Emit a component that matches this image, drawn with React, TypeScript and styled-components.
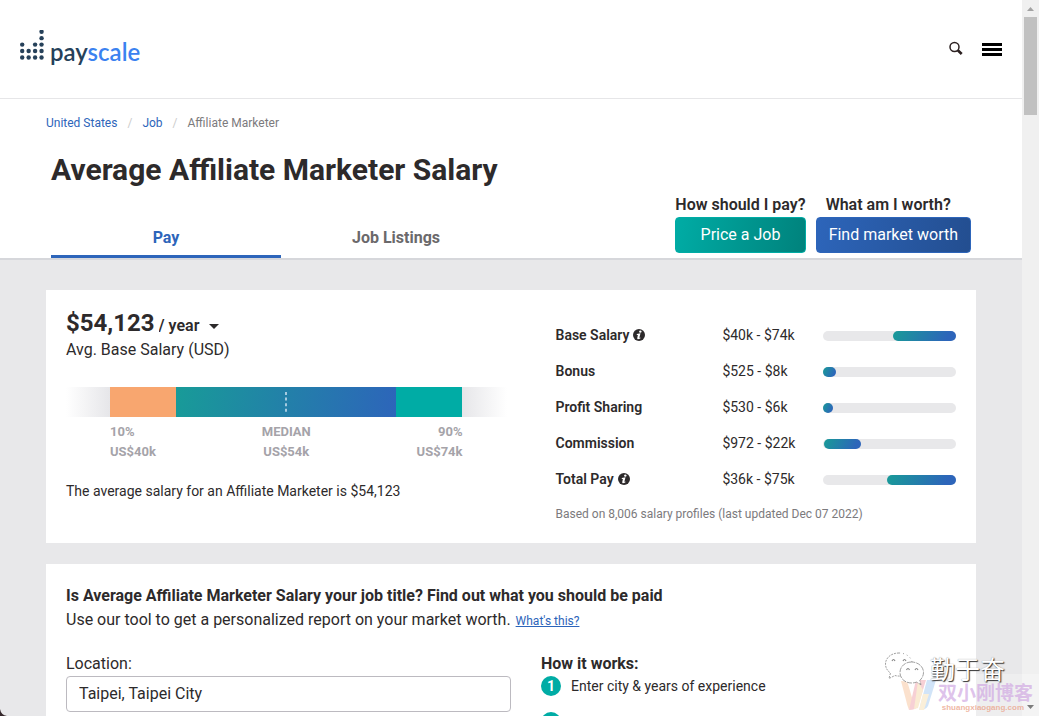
import React from "react";
import styled, { createGlobalStyle } from "styled-components";

const GlobalStyle = createGlobalStyle`
  *, *::before, *::after { box-sizing: border-box; }
  html, body { margin: 0; height: 100%; }
  body {
    background: #fff;
    color: #2d2a2b;
    font-family: Roboto, "Noto Sans CJK SC", sans-serif;
    font-size: 16px;
    line-height: 24px;
  }
  h1, h2, p, ol, ul { margin: 0; padding: 0; }
  ol, ul { list-style: none; }
  button, input, select { font: inherit; color: inherit; }
`;

const Shell = styled.div`
  position: relative;
  display: grid;
  grid-template-columns: minmax(0, 1fr) 17px;
  height: 100vh;
  overflow: hidden;
`;

const Page = styled.div`
  display: flex;
  flex-direction: column;
  min-height: 0;
  overflow: hidden;
`;

const ScrollTrack = styled.div`
  display: flex;
  flex-direction: column;
  align-items: center;
  background: #f0f0f0;
`;

const ScrollArrow = styled.svg`
  display: block;
  flex: none;
  width: 17px;
  height: 17px;
`;

const ScrollThumb = styled.div`
  width: 13px;
  height: 98px;
  margin-bottom: auto;
  background: #c1c1c1;
`;

const Header = styled.header`
  flex: none;
  display: flex;
  align-items: center;
  justify-content: space-between;
  height: 99px;
  padding: 0 20px 0 19px;
  border-bottom: 1px solid #e6e6e8;
`;

const Logo = styled.a`
  display: flex;
  align-items: flex-end;
  gap: 5px;
  padding-bottom: 4px;
  color: #26415a;
  text-decoration: none;
  font-family: Lato, sans-serif;
  font-size: 24px;
  font-weight: 600;
  line-height: 26px;
  svg { display: block; margin-bottom: 5px; }
`;

const LogoAccent = styled.span`
  color: #3b82f0;
`;

const HeaderTools = styled.div`
  display: flex;
  align-items: center;
  gap: 18px;
`;

const IconButton = styled.button`
  display: flex;
  padding: 0;
  border: 0;
  background: none;
  cursor: pointer;
`;

const Container = styled.div`
  width: calc(100% - 92px);
  max-width: 930px;
  margin: 0 auto;
`;

const TitleArea = styled.section`
  flex: none;
  padding-top: 14px;
  border-bottom: 2px solid #d6d7db;
`;

const Crumbs = styled.ul`
  display: flex;
  gap: 10px;
  font-size: 12px;
  line-height: 20px;
  color: #7c7a7d;
`;

const CrumbSlash = styled.span`
  margin-right: 10px;
  color: #ccc;
`;

const CrumbLink = styled.a`
  color: #2d65ba;
  text-decoration: none;
`;

const Title = styled.h1`
  margin-top: 19px;
  padding-left: 5px;
  font-size: 30px;
  font-weight: 700;
  line-height: 36px;
`;

const TitleRow = styled.div`
  display: flex;
  align-items: flex-end;
  justify-content: space-between;
  margin-top: 7px;
  padding: 0 5px;
`;

const Tabs = styled.nav`
  display: flex;
`;

const Tab = styled.a<{ $active?: boolean }>`
  width: 230px;
  padding: 10px 0 7px;
  border-bottom: 3px solid ${(p) => (p.$active ? "#2d65ba" : "transparent")};
  color: ${(p) => (p.$active ? "#2d65ba" : "#6b696b")};
  font-weight: 700;
  line-height: 20px;
  text-align: center;
  text-decoration: none;
`;

const Actions = styled.div`
  display: flex;
  gap: 10px;
  padding-bottom: 5px;
`;

const Action = styled.div`
  display: flex;
  flex-direction: column;
  gap: 2px;
`;

const ActionLabel = styled.span<{ $inset?: boolean }>`
  padding-left: ${(p) => (p.$inset ? "10px" : "0")};
  font-weight: 600;
  line-height: 20px;
`;

const ActionButton = styled.button<{ $tone: "teal" | "blue" }>`
  height: 36px;
  padding: 0 12px;
  border: 1px solid ${(p) => (p.$tone === "teal" ? "#00aca5" : "#2d65ba")};
  border-radius: 4px;
  background: ${(p) =>
    p.$tone === "teal"
      ? "linear-gradient(100deg, #00aca5, #00827c)"
      : "linear-gradient(100deg, #2d65ba, #234e90)"};
  color: #fff;
  line-height: 24px;
  white-space: nowrap;
  cursor: pointer;
`;

const Main = styled.main`
  flex: 1 0 auto;
  padding-top: 30px;
  background: #e8e8ea;
`;

const Card = styled.section`
  margin-bottom: 21px;
  padding: 20px 20px 19px;
  background: #fff;
`;

const SalaryGrid = styled.div`
  display: grid;
  grid-template-columns: 11fr 9fr;
`;

const Amount = styled.div`
  display: flex;
  align-items: baseline;
  gap: 4px;
  font-size: 24px;
  font-weight: 700;
  line-height: 26px;
`;

const PeriodField = styled.label`
  position: relative;
  font-size: 16px;
  line-height: 24px;
  svg { position: absolute; right: 0; top: 10px; pointer-events: none; }
`;

const PeriodSelect = styled.select`
  appearance: none;
  padding: 0 17px 0 0;
  border: 0;
  background: none;
  font-weight: 600;
`;

const RangeChart = styled.div`
  width: 90%;
  margin-top: 25px;
`;

const RangeBar = styled.div`
  display: grid;
  grid-template-columns: 10fr 15fr 50fr 15fr 10fr;
  height: 30px;
`;

const RangeSegment = styled.div<{ $fill: string }>`
  display: flex;
  align-items: center;
  justify-content: center;
  background: ${(p) => p.$fill};
`;

const MedianMark = styled.svg`
  display: block;
  width: 2px;
  height: 20px;
`;

const RangeLabels = styled.div`
  display: flex;
  justify-content: space-between;
  margin-top: 5px;
  padding: 0 10%;
  color: #a5a3a9;
  font-size: 13px;
  font-weight: 700;
  line-height: 20px;
`;

const RangeLabel = styled.div<{ $align: string }>`
  flex: 1;
  text-align: ${(p) => p.$align};
`;

const Summary = styled.p`
  margin-top: 19px;
  font-size: 14px;
  line-height: 20px;
`;

const PayTable = styled.table`
  width: 100%;
  margin-top: 7px;
  border-collapse: collapse;
  table-layout: fixed;
  font-size: 14px;
  th, td { height: 36px; padding: 0; text-align: left; line-height: 20px; }
  th { width: calc(500% / 12); font-weight: 600; }
  td { width: 25%; }
  td:last-child { width: calc(100% / 3); }
`;

const RowName = styled.span`
  display: inline-flex;
  align-items: center;
  gap: 4px;
`;

const Track = styled.div`
  display: flex;
  height: 10px;
  margin-top: 1px;
  border-radius: 5px;
  background: #e8e8ea;
`;

const TrackFill = styled.div`
  border-radius: 5px;
  background: linear-gradient(115deg, #189b98, #2d65ba 85%);
`;

const SourceNote = styled.p`
  margin-top: 7px;
  color: #7c7a7d;
  font-size: 12px;
  line-height: 20px;
`;

const CardTitle = styled.h2`
  font-size: 16px;
  font-weight: 700;
  line-height: 24px;
`;

const HintLink = styled.a`
  margin-left: 1px;
  color: #2d65ba;
  font-size: 12px;
`;

const ReportGrid = styled.div`
  display: grid;
  grid-template-columns: 50% 1fr;
  column-gap: 30px;
  margin-top: 19px;
`;

const Field = styled.label`
  display: flex;
  flex-direction: column;
`;

const TextInput = styled.input`
  width: 100%;
  height: 36px;
  padding: 0 12px 2px;
  border: 1px solid #bcbac0;
  border-radius: 4px;
  background: #fff;
`;

const Steps = styled.ol`
  display: flex;
  flex-direction: column;
  gap: 16px;
  font-size: 14px;
  line-height: 20px;
`;

const Step = styled.li`
  display: flex;
  gap: 10px;
`;

const StepNumber = styled.span`
  width: 20px;
  height: 20px;
  border-radius: 50%;
  background: #00aca5;
  color: #fff;
  font-weight: 700;
  text-align: center;
`;

const Corner = styled.svg`
  position: absolute;
  left: 0;
  bottom: 0;
`;

const AccountMark = styled.div`
  position: absolute;
  right: 34px;
  bottom: 30px;
  display: flex;
  align-items: center;
  gap: 5px;
  color: #fff;
  font-family: "Noto Sans CJK SC", sans-serif;
  font-size: 25px;
  line-height: 26px;
  text-shadow: 1px 1px 1px #333, 0 0 1px #888;
  pointer-events: none;
`;

const BlogMark = styled.div`
  position: absolute;
  right: 0;
  bottom: 0;
  display: flex;
  align-items: flex-end;
  gap: 2px;
  height: 42px;
  padding: 0 6px 2px 0;
  background: rgba(255, 255, 255, 0.25);
  pointer-events: none;
  svg { margin-bottom: 4px; }
`;

const BlogText = styled.div`
  display: flex;
  flex-direction: column;
  align-items: flex-end;
  color: rgba(208, 168, 226, 0.7);
  font-family: "Noto Sans CJK SC", sans-serif;
  font-size: 19px;
  font-weight: 700;
  line-height: 20px;
`;

const BlogUrl = styled.span`
  padding-right: 9px;
  color: rgba(235, 165, 140, 0.8);
  font-family: "Liberation Sans", sans-serif;
  font-size: 8px;
  line-height: 12px;
`;

const logoColumns = [3, 2, 3, 5];

function LogoDots() {
  return (
    <svg width="26" height="30" viewBox="0 0 26 30" fill="#26415a" aria-hidden="true">
      {logoColumns.map((count, col) =>
        Array.from({ length: count }, (_, row) => (
          <circle key={`${col}-${row}`} cx={3.2 + col * 6.45} cy={27.5 - row * 6.45} r="2.2" />
        ))
      )}
    </svg>
  );
}

function SearchIcon() {
  return (
    <svg width="16" height="16" viewBox="0 0 16 16" fill="none" stroke="#2b2020">
      <circle cx="6.5" cy="6" r="4.5" strokeWidth="1.500" />
      <path d="M9.800 9.200 13.700 13" strokeWidth="2.600" />
    </svg>
  );
}

function MenuIcon() {
  return (
    <svg width="20" height="13" viewBox="0 0 20 13" fill="#000">
      <path d="M0 0h20v3H0zM0 5h20v3H0zM0 10h20v3H0z" />
    </svg>
  );
}

function InfoIcon() {
  return (
    <svg width="12" height="12" viewBox="0 0 12 12" role="img" aria-label="More information">
      <circle cx="6" cy="6" r="6" fill="#2d2a2b" />
      <circle cx="7.3" cy="2.6" r="1.2" fill="#fff" />
      <path d="M3.800 5 7.500 4.300 6.400 8.500Q6.400 9 7.600 8.500L7.300 9.400Q3.700 11.300 4.300 8.700L4.900 6 3.800 5.900Z" fill="#fff" />
    </svg>
  );
}

function ChatIcon() {
  return (
    <svg width="42" height="36" viewBox="0 0 42 36" fill="#fff" stroke="#888" strokeWidth="0.8">
      <path d="M16 3C8 3 2.500 8 2.500 14c0 4 2 7 5 9l-1.500 5.500 6-3c2 .6 4 .7 6 .5" strokeDasharray="2 1" />
      <path d="M16 3c7 0 12 4 13 9" strokeDasharray="1 3" />
      <path
        d="M28.500 12C22 12 17 16.500 17 22.500S22 33 28.500 33c1.800 0 3.500-.3 5-.9l4.500 2.600-1.200-4.300c2.200-2 3.700-4.800 3.700-8C40.500 16.500 35 12 28.500 12Z"
        strokeDasharray="5 1"
      />
      <path d="M9 11q1.500-3 3 0M20 11q1.500-3 3 0M23.500 20q1.500-3 3 0M32 20q1.500-3 3 0" fill="none" strokeWidth="1.200" />
    </svg>
  );
}

function BlogIcon() {
  return (
    <svg width="35" height="30" viewBox="0 0 35 30" opacity=".4">
      <path d="M0 1q6 0 7 3l5 17-4 9Q6 25 5 20Z" fill="#f7b684" />
      <path d="M15 0h10l-8 26q-2 4-9 4Z" fill="#ec8c97" />
      <path d="M17 1 22 10 17 28l-4 1Z" fill="#f4cf93" />
      <path d="M26 0h9l-8 26q-2 4-9 4Z" fill="#8dbdee" />
      <path d="M22 14h6l-5 16h-5Z" fill="#f4d9a3" />
    </svg>
  );
}

type PayRow = { name: string; value: string; start: number; size: number; info?: boolean };

const payRows: PayRow[] = [
  { name: "Base Salary", value: "$40k - $74k", start: 53, size: 47, info: true },
  { name: "Bonus", value: "$525 - $8k", start: 0, size: 10 },
  { name: "Profit Sharing", value: "$530 - $6k", start: 0, size: 8 },
  { name: "Commission", value: "$972 - $22k", start: 1, size: 28 },
  { name: "Total Pay", value: "$36k - $75k", start: 48, size: 52, info: true },
];

export default function App() {
  return (
    <>
      <GlobalStyle />
      <Shell>
        <Page>
          <Header>
            <Logo href="#" aria-label="payscale">
              <LogoDots />
              <span>
                pay<LogoAccent>scale</LogoAccent>
              </span>
            </Logo>
            <HeaderTools>
              <IconButton aria-label="Search">
                <SearchIcon />
              </IconButton>
              <IconButton aria-label="Menu">
                <MenuIcon />
              </IconButton>
            </HeaderTools>
          </Header>

          <TitleArea>
            <Container>
              <Crumbs>
                <li>
                  <CrumbLink href="#">United States</CrumbLink>
                </li>
                <li>
                  <CrumbSlash>/</CrumbSlash>
                  <CrumbLink href="#">Job</CrumbLink>
                </li>
                <li>
                  <CrumbSlash>/</CrumbSlash>Affiliate Marketer
                </li>
              </Crumbs>
              <Title>Average Affiliate Marketer Salary</Title>
              <TitleRow>
                <Tabs>
                  <Tab href="#" $active>
                    Pay
                  </Tab>
                  <Tab href="#">Job Listings</Tab>
                </Tabs>
                <Actions>
                  <Action>
                    <ActionLabel>How should I pay?</ActionLabel>
                    <ActionButton $tone="teal">Price a Job</ActionButton>
                  </Action>
                  <Action>
                    <ActionLabel $inset>What am I worth?</ActionLabel>
                    <ActionButton $tone="blue">Find market worth</ActionButton>
                  </Action>
                </Actions>
              </TitleRow>
            </Container>
          </TitleArea>

          <Main>
            <Container>
              <Card>
                <SalaryGrid>
                  <div>
                    <Amount>
                      $54,123
                      <PeriodField>
                        <PeriodSelect aria-label="Pay period">
                          <option>/ year</option>
                          <option>/ hour</option>
                        </PeriodSelect>
                        <svg width="10" height="5" viewBox="0 0 10 5" fill="#2d2a2b">
                          <path d="M0 0h10L5 5z" />
                        </svg>
                      </PeriodField>
                    </Amount>
                    <p>Avg. Base Salary (USD)</p>
                    <RangeChart>
                      <RangeBar>
                        <RangeSegment $fill="linear-gradient(90deg, #fff, #e6e6e9)" />
                        <RangeSegment $fill="#f8a66f" />
                        <RangeSegment $fill="linear-gradient(98deg, #189b98, #2d65ba)">
                          <MedianMark viewBox="0 0 2 20">
                            <path d="M1 0v20" stroke="#a5cbe0" strokeWidth="2" strokeDasharray="3 2.600" />
                          </MedianMark>
                        </RangeSegment>
                        <RangeSegment $fill="#00aca5" />
                        <RangeSegment $fill="linear-gradient(90deg, #e6e6e9, #fff)" />
                      </RangeBar>
                      <RangeLabels>
                        <RangeLabel $align="left">
                          10%
                          <br />
                          US$40k
                        </RangeLabel>
                        <RangeLabel $align="center">
                          MEDIAN
                          <br />
                          US$54k
                        </RangeLabel>
                        <RangeLabel $align="right">
                          90%
                          <br />
                          US$74k
                        </RangeLabel>
                      </RangeLabels>
                    </RangeChart>
                    <Summary>The average salary for an Affiliate Marketer is $54,123</Summary>
                  </div>
                  <div>
                    <PayTable>
                      <tbody>
                        {payRows.map((row) => (
                          <tr key={row.name}>
                            <th scope="row">
                              <RowName>
                                {row.name}
                                {row.info && <InfoIcon />}
                              </RowName>
                            </th>
                            <td>{row.value}</td>
                            <td>
                              <Track>
                                <TrackFill style={{ marginLeft: `${row.start}%`, width: `${row.size}%` }} />
                              </Track>
                            </td>
                          </tr>
                        ))}
                      </tbody>
                    </PayTable>
                    <SourceNote>Based on 8,006 salary profiles (last updated Dec 07 2022)</SourceNote>
                  </div>
                </SalaryGrid>
              </Card>

              <Card>
                <CardTitle>
                  Is Average Affiliate Marketer Salary your job title? Find out what you should be paid
                </CardTitle>
                <p>
                  Use our tool to get a personalized report on your market worth.{" "}
                  <HintLink href="#">What's this?</HintLink>
                </p>
                <ReportGrid>
                  <Field>
                    Location:
                    <TextInput type="text" defaultValue="Taipei, Taipei City" />
                  </Field>
                  <div>
                    <CardTitle>How it works:</CardTitle>
                    <Steps>
                      <Step>
                        <StepNumber>1</StepNumber>
                        Enter city &amp; years of experience
                      </Step>
                      <Step>
                        <StepNumber />
                      </Step>
                    </Steps>
                  </div>
                </ReportGrid>
              </Card>
            </Container>
          </Main>
        </Page>

        <ScrollTrack>
          <ScrollArrow viewBox="0 0 17 17">
            <path d="M5 11h7L8.500 7z" fill="#a3a3a3" />
          </ScrollArrow>
          <ScrollThumb />
          <ScrollArrow viewBox="0 0 17 17">
            <path d="M5 6h7L8.500 10z" fill="#505050" />
          </ScrollArrow>
        </ScrollTrack>

        <Corner width="7" height="7" viewBox="0 0 7 7" aria-hidden="true">
          <path d="M0 0Q1 6 7 7H0Z" fill="#35282c" />
        </Corner>
        <BlogMark>
          <BlogIcon />
          <BlogText>
            双小刚博客
            <BlogUrl>shuangxiaogang.com</BlogUrl>
          </BlogText>
        </BlogMark>
        <AccountMark>
          <ChatIcon />
          勤于奋
        </AccountMark>
      </Shell>
    </>
  );
}
